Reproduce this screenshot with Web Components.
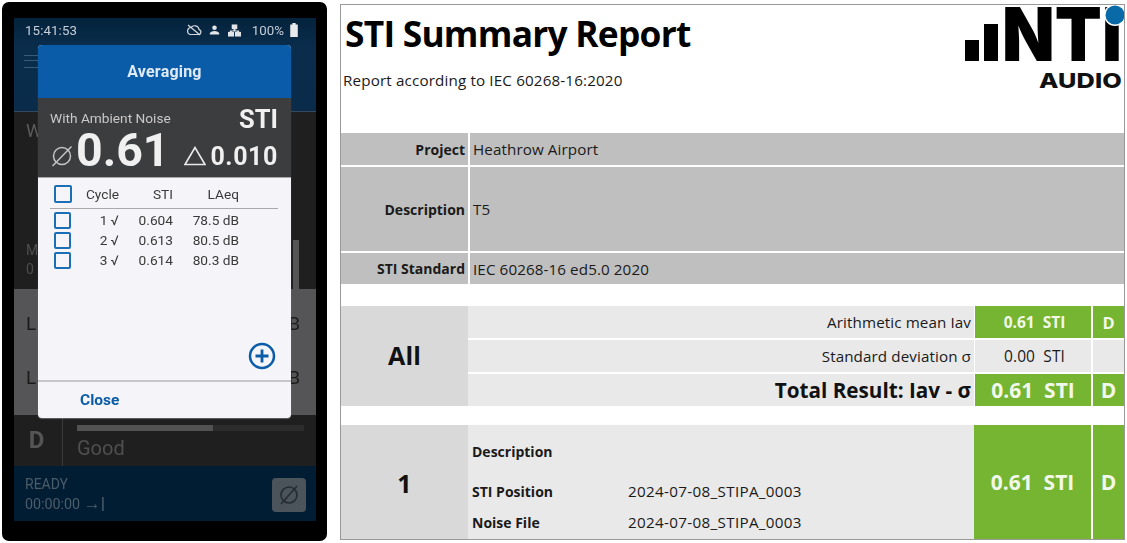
<!DOCTYPE html>
<html>
<head>
<meta charset="utf-8">
<title>STI Summary</title>
<style>
  html, body { margin: 0; background: #fff; }
  body { width: 1127px; height: 543px; overflow: hidden; display: flex; align-items: flex-start; gap: 13px; padding: 2px 0 0 2px; box-sizing: border-box; }
</style>
</head>
<body>
<phone-panel>
  <averaging-dialog></averaging-dialog>
</phone-panel>
<report-sheet>
  <report-head></report-head>
  <info-rows></info-rows>
  <result-all></result-all>
  <result-one></result-one>
</report-sheet>

<script>
class PhonePanel extends HTMLElement {
    constructor() {
        super();
        const shadow = this.attachShadow({ mode: 'open' });
        shadow.innerHTML = `
            <style>
                :host {
                    display: block;
                    width: 325px;
                    height: 539px;
                    box-sizing: border-box;
                    padding: 16px 11px 20px 12px;
                    background: #000;
                    border-radius: 7px;
                    font-family: Roboto, "Liberation Sans", sans-serif;
                    filter: blur(.35px);
                }
                .screen { position: relative; height: 503px; display: flex; flex-direction: column; color: #5c5c5c; }
                .top {
                    height: 94px;
                    flex: none;
                    box-sizing: border-box;
                    padding: 0 18px 0 11px;
                    background: linear-gradient(#04223b, #0a2d4c 30%, #0a2c4a);
                    border-bottom: 1px solid #33495c;
                }
                .status { display: flex; align-items: center; height: 24px; color: #c6ced6; font-size: 13.300px; }
                .status .time { flex: 1; letter-spacing: .1px; }
                .status svg { display: block; }
                .status .pct { margin: 0 6px 0 11px; font-size: 13.300px; }
                .burger { width: 14px; height: 11px; margin-top: 13px; margin-left: -1px; border-top: 1px solid #3b5a75; border-bottom: 1px solid #3b5a75; position: relative; }
                .burger::after { content: ""; position: absolute; left: 0; right: 0; top: 4px; border-top: 1px solid #3b5a75; }
                .mid { height: 177px; flex: none; background: #1f1f20; padding: 8px 0 0 12px; box-sizing: border-box; font-size: 18px; display: flex; flex-direction: column; }
                .mid .m { margin-top: 101px; font-size: 14px; color: #4e4e4e; }
                .mid .z { font-size: 14px; color: #4e4e4e; margin-top: 3px; }
                .mid .rail { position: absolute; left: 279px; top: 222px; width: 6px; height: 49px; background: #555; }
                .gray { height: 126px; flex: none; background: #555557; color: #1b1b1b; font-size: 19px; display: flex; flex-direction: column; justify-content: space-between; padding: 23px 16px 26px 12px; box-sizing: border-box; }
                .gray div { display: flex; justify-content: space-between; }
                .grade { height: 51px; flex: none; background: #1f1f20; display: flex; }
                .grade .d { width: 49px; padding-right: 3px; box-sizing: border-box; text-align: center; border-right: 1px solid #3a3a3a; font-size: 24px; font-weight: 700; line-height: 50px; color: #555; }
                .grade .r { flex: 1; padding: 10px 12px 0 14px; }
                .bar { height: 6px; background: linear-gradient(90deg, #525252 60%, #2c2c2c 60%); }
                .good { font-size: 20px; margin-top: 5px; color: #4f4f4f; }
                .foot { height: 55px; flex: none; background: #011d33; display: flex; align-items: center; justify-content: space-between; padding: 2px 10px 0 11px; box-sizing: border-box; color: #4d5c69; font-size: 14.300px; line-height: 19px; }
                .foot .ready { font-size: 14px; }
                .foot .end { font-size: 17px; font-weight: 700; }
                .stop { width: 34px; height: 34px; border-radius: 4px; background: #4c545b; display: flex; align-items: center; justify-content: center; }
            </style>
            <div class="screen">
                <div class="top">
                    <div class="status">
                        <span class="time">15:41:53</span>
                        <svg width="16" height="12" viewBox="0 0 16 12" fill="none" stroke="#d3d8dd" stroke-width="1.2">
                            <path d="M4 10.5h8.5a2.5 2.5 0 0 0 .6-4.9A4.6 4.6 0 0 0 5 3.5 3.6 3.6 0 0 0 4 10.5z"/><path d="M2 1l12 10"/>
                        </svg>
                        <svg style="margin-left:7px" width="11" height="12" viewBox="0 0 12 12" fill="#e2e5e8">
                            <circle cx="6" cy="3.5" r="2.5"/><path d="M1 11V9.6C1 8 3.500 7 6 7s5 1 5 2.6V11z"/>
                        </svg>
                        <svg style="margin-left:8px" width="13" height="13" viewBox="0 0 14 13" fill="#e2e5e8">
                            <rect x="4" y="0" width="6" height="5"/><rect x="0" y="8" width="6.500" height="5"/><rect x="7.500" y="8" width="6.500" height="5"/><path d="M6 5h2v1.500h4V8h-2V7.500H4V8H2V6.500h4z"/>
                        </svg>
                        <span class="pct">100%</span>
                        <svg width="8" height="14" viewBox="0 0 7 13" fill="#e8eaec"><path d="M2 0h3v1.500h2V13H0V1.500h2z"/></svg>
                    </div>
                    <div class="burger"></div>
                </div>
                <div class="mid">
                    <span>W</span>
                    <span class="m">M</span>
                    <span class="z">0</span>
                    <div class="rail"></div>
                </div>
                <div class="gray">
                    <div><span>L</span><span>B</span></div>
                    <div><span>L</span><span>B</span></div>
                </div>
                <div class="grade">
                    <div class="d">D</div>
                    <div class="r"><div class="bar"></div><div class="good">Good</div></div>
                </div>
                <div class="foot">
                    <div><div class="ready">READY</div><div>00:00:00 <span class="end">→|</span></div></div>
                    <div class="stop">
                        <svg width="22" height="22" viewBox="0 0 22 22" fill="none" stroke="#252c33" stroke-width="1.600"><circle cx="11" cy="11" r="8"/><path d="M3 20L19 2"/></svg>
                    </div>
                </div>
                <slot></slot>
            </div>
        `;
    }
}

class AveragingDialog extends HTMLElement {
    constructor() {
        super();
        const shadow = this.attachShadow({ mode: 'open' });
        const rows = [['1 √', '0.604', '78.5 dB'], ['2 √', '0.613', '80.5 dB'], ['3 √', '0.614', '80.3 dB']];
        shadow.innerHTML = `
            <style>
                :host {
                    position: absolute;
                    left: 24px;
                    top: 27px;
                    width: 253px;
                    height: 373px;
                    display: flex;
                    flex-direction: column;
                    border-radius: 4px;
                    overflow: hidden;
                    background: #f4f4f9;
                    box-shadow: 0 1px 1px rgba(255,255,255,.3);
                }
                .head { height: 53px; flex: none; background: #0a5ca8; color: #dfeaf5; font-size: 16px; font-weight: 700; display: flex; align-items: center; justify-content: center; letter-spacing: .2px; }
                .avg { height: 80px; flex: none; background: #3c3d3f; color: #f0f0f0; position: relative; border-bottom: 1px solid #aaa; box-sizing: border-box; }
                .avg .with { position: absolute; left: 12px; top: 12px; font-size: 13.700px; color: #c9c9c9; }
                .avg .sti { position: absolute; right: 13px; top: 6px; font-size: 25.500px; font-weight: 700; }
                .avg .big { position: absolute; left: 38px; top: 24px; font-size: 46.500px; font-weight: 700; line-height: 56px; }
                .avg .delta { position: absolute; right: 13px; top: 44px; font-size: 25px; font-weight: 700; line-height: 30px; letter-spacing: .6px; }
                .avg svg { position: absolute; }
                .table { padding: 7px 0 0 12px; color: #3a3a3a; font-size: 13.700px; }
                .row { display: grid; grid-template-columns: 21px 48px 54px 66px; height: 20px; align-items: center; justify-items: end; }
                .row.hd { height: 18px; width: 228px; border-bottom: 1.500px solid #a9a9a9; padding-bottom: 5px; }
                .first { margin-top: 1px; }
                .box { justify-self: start; margin-left: 4px; width: 13px; height: 13px; border: 2px solid #1a6fb5; border-radius: 2px; }
                .hd .box { width: 14px; height: 14px; }
                .grow { flex: 1; display: flex; align-items: flex-end; justify-content: flex-end; padding: 0 15px 10px 0; }
                .close { height: 38px; flex: none; box-sizing: border-box; border-top: 2px solid #c6c6c8; padding-left: 42px; display: flex; align-items: center; color: #0a5ca8; font-size: 15.500px; font-weight: 700; }
            </style>
            <div class="head">Averaging</div>
            <div class="avg">
                <span class="with">With Ambient Noise</span>
                <span class="sti">STI</span>
                <svg style="left:13px;top:47px" width="22" height="22" viewBox="0 0 22 22" fill="none" stroke="#c4c4c4" stroke-width="1.500"><circle cx="11" cy="11" r="8.500"/><path d="M1.500 21L20.500 1.500"/></svg>
                <span class="big">0.61</span>
                <svg style="left:146px;top:48px" width="22" height="20" viewBox="0 0 22 20" fill="none" stroke="#e8e8e8" stroke-width="1.600"><path d="M11 1.500L1 18.500h20z"/></svg>
                <span class="delta">0.010</span>
            </div>
            <div class="table">
                <div class="row hd"><span class="box"></span><span>Cycle</span><span>STI</span><span>LAeq</span></div>
                ${rows.map((r, i) => `<div class="row ${i === 0 ? 'first' : ''}"><span class="box"></span><span>${r[0]}</span><span>${r[1]}</span><span>${r[2]}</span></div>`).join('')}
            </div>
            <div class="grow">
                <svg width="28" height="28" viewBox="0 0 28 28" fill="none" stroke="#0a5ca8"><circle cx="14" cy="14" r="12" stroke-width="2.500"/><path d="M14 7.500v13M7.500 14h13" stroke-width="2.800"/></svg>
            </div>
            <div class="close">Close</div>
        `;
    }
}

class ReportSheet extends HTMLElement {
    constructor() {
        super();
        const shadow = this.attachShadow({ mode: 'open' });
        shadow.innerHTML = `
            <style>
                :host {
                    display: block;
                    width: 785px;
                    height: 536px;
                    margin-top: 2px;
                    box-sizing: border-box;
                    border: 1px solid #999;
                    background: #fff;
                    color: #1a1a1a;
                    font-family: "Open Sans", "Noto Sans", sans-serif;
                    font-size: 15.200px;
                    letter-spacing: .1px;
                    overflow: hidden;
                }
            </style>
            <slot></slot>
        `;
    }
}

class ReportHead extends HTMLElement {
    constructor() {
        super();
        const shadow = this.attachShadow({ mode: 'open' });
        shadow.innerHTML = `
            <style>
                :host { display: flex; height: 128px; justify-content: space-between; box-sizing: border-box; padding: 0 0 0 2px; }
                h1 { margin: 6px 0 0 2px; font-size: 35.300px; font-weight: 700; line-height: 44px; color: #000; letter-spacing: -.75px; white-space: nowrap; }
                p { margin: 16px 0 0; font-size: 15.200px; line-height: 18px; letter-spacing: .15px; }
                svg { display: block; flex: none; }
            </style>
            <div>
                <h1>STI Summary Report</h1>
                <p>Report according to IEC 60268-16:2020</p>
            </div>
            <svg width="160" height="88" viewBox="0 0 160 88">
                <rect x="1" y="35" width="14" height="21" fill="#000"/>
                <rect x="20" y="19" width="14" height="37" fill="#000"/>
                <text x="38" y="56" font-family="Inter, sans-serif" font-weight="900" font-size="74" textLength="120" lengthAdjust="spacingAndGlyphs" fill="#000">NTI</text>
                <circle cx="151" cy="10" r="11" fill="#fff"/>
                <circle cx="151" cy="10" r="9.500" fill="#0a6aa8"/>
                <text x="75" y="82.500" font-family="Inter, sans-serif" font-weight="800" font-size="20.500" textLength="83" lengthAdjust="spacingAndGlyphs" fill="#111">AUDIO</text>
            </svg>
        `;
    }
}

class InfoRows extends HTMLElement {
    constructor() {
        super();
        const shadow = this.attachShadow({ mode: 'open' });
        shadow.innerHTML = `
            <style>
                :host { display: grid; grid-template-columns: 127px 1fr; grid-template-rows: 32px 84px 31px; gap: 2px; }
                div { background: #bfbfbf; display: flex; align-items: center; }
                .k { justify-content: flex-end; padding-right: 3px; font-weight: 700; font-size: 14px; letter-spacing: 0; }
                .v { padding-left: 3px; }
            </style>
            <div class="k">Project</div><div class="v">Heathrow Airport</div>
            <div class="k">Description</div><div class="v">T5</div>
            <div class="k">STI Standard</div><div class="v">IEC 60268-16 ed5.0 2020</div>
        `;
    }
}

class ResultAll extends HTMLElement {
    constructor() {
        super();
        const shadow = this.attachShadow({ mode: 'open' });
        shadow.innerHTML = `
            <style>
                :host { display: grid; margin-top: 22px; grid-template-columns: 127px 506px 117px 33px; grid-template-rows: 32px 32px 32px; row-gap: 2px; }
                div { display: flex; align-items: center; background: #e9e9e9; }
                .all { grid-row: 1 / 4; background: #d9d9d9; justify-content: center; font-size: 25px; font-weight: 700; padding-bottom: 2px; color: #111; }
                .lbl { justify-content: flex-end; padding-right: 3px; }
                .val { justify-content: center; margin-left: 1px; padding-left: 3px; font-size: 15.500px; }
                .grn { background: #76b531; color: #f2f8ea; font-weight: 700; letter-spacing: 0; }
                .d { margin-left: 2px; justify-content: center; font-weight: 700; font-size: 16.500px; }
                .tot { font-size: 20.700px; font-weight: 700; color: #111; letter-spacing: 0; }
                .val.lg { font-size: 21px; padding-left: 0; }
                .d.lg { font-size: 21px; }
            </style>
            <div class="all">All</div>
            <div class="lbl">Arithmetic mean Iav</div><div class="val grn">0.61&nbsp; STI</div><div class="d grn">D</div>
            <div class="lbl">Standard deviation σ</div><div class="val">0.00&nbsp; STI</div><div class="d"></div>
            <div class="lbl tot">Total Result: Iav - σ</div><div class="val grn lg">0.61&nbsp; STI</div><div class="d grn lg">D</div>
        `;
    }
}

class ResultOne extends HTMLElement {
    constructor() {
        super();
        const shadow = this.attachShadow({ mode: 'open' });
        shadow.innerHTML = `
            <style>
                :host { display: grid; margin-top: 19px; height: 114px; grid-template-columns: 127px 506px 117px 33px; }
                .num { background: #d9d9d9; display: flex; align-items: center; justify-content: center; font-size: 25px; font-weight: 700; color: #111; padding-top: 1px; }
                .info { background: #e9e9e9; display: grid; grid-template-columns: 156px 1fr; grid-template-rows: 40px 40px 22px; padding: 6px 0 0 4px; box-sizing: border-box; align-items: center; }
                b { font-weight: 700; font-size: 14px; letter-spacing: 0; }
                .date { letter-spacing: .33px; }
                .grn { background: #76b531; color: #f2f8ea; font-weight: 700; font-size: 21px; letter-spacing: 0; display: flex; align-items: center; justify-content: center; }
                .d { margin-left: 2px; }
            </style>
            <div class="num">1</div>
            <div class="info">
                <b>Description</b><span></span>
                <b>STI Position</b><span class="date">2024-07-08_STIPA_0003</span>
                <b>Noise File</b><span class="date">2024-07-08_STIPA_0003</span>
            </div>
            <div class="grn s">0.61&nbsp; STI</div>
            <div class="grn d">D</div>
        `;
    }
}

customElements.define('phone-panel', PhonePanel);
customElements.define('averaging-dialog', AveragingDialog);
customElements.define('report-sheet', ReportSheet);
customElements.define('report-head', ReportHead);
customElements.define('info-rows', InfoRows);
customElements.define('result-all', ResultAll);
customElements.define('result-one', ResultOne);
</script>
</body>
</html>
